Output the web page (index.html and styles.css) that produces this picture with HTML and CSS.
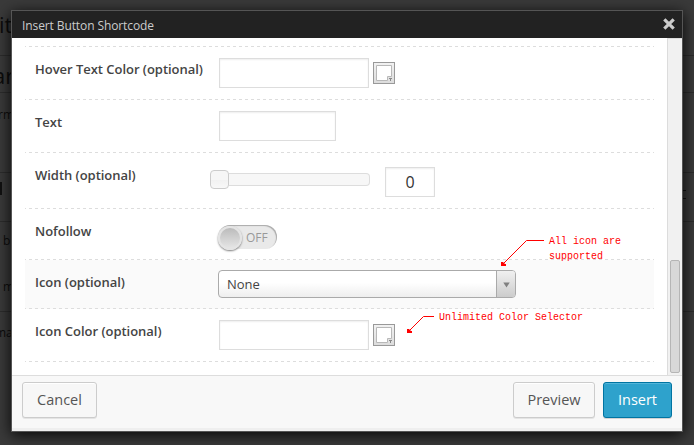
FILE: index.html
```html
<!DOCTYPE html>
<html lang="en">
<head>
<meta charset="utf-8">
<title>Insert Button Shortcode</title>
<link rel="stylesheet" href="styles.css">
</head>
<body>
<div class="backdrop" aria-hidden="true">
  <i class="rule r1"></i><i class="rule r2"></i><i class="rule r3"></i><i class="rule r4"></i><i class="rule r5"></i>
  <span class="ghost g1">it</span>
  <span class="ghost g2">ar</span>
  <span class="ghost g3">rm</span>
  <span class="ghost g4">b</span>
  <span class="ghost g5">m</span>
  <span class="ghost g6">ma</span>
  <i class="chip"></i>
  <i class="menu"></i>
</div>
<div class="modal">
  <header class="head">
    <span class="title">Insert Button Shortcode</span>
    <svg class="close" width="14" height="14" viewBox="0 0 14 14"><path d="M2.3 2.3L11.7 11.7M11.7 2.3L2.3 11.7"/></svg>
  </header>
  <main class="body">
    <div class="form">
      <div class="lead"></div>
      <div class="row">
        <label class="label">Hover Text Color (optional)</label>
        <div class="input"></div>
        <svg class="swatch" width="22" height="22" viewBox="0 0 22 22"><use href="#picker"/></svg>
      </div>
      <div class="row">
        <label class="label">Text</label>
        <div class="input short"></div>
      </div>
      <div class="row tall">
        <label class="label">Width (optional)</label>
        <div class="slider"><div class="knob"></div><div class="track"></div></div>
        <div class="input number">0</div>
      </div>
      <div class="row nofollow">
        <label class="label">Nofollow</label>
        <div class="toggle"><div class="ball"></div><span>OFF</span></div>
      </div>
      <div class="row icon">
        <label class="label">Icon (optional)</label>
        <div class="select"><span class="value">None</span><span class="arrow"><svg width="7" height="6" viewBox="0 0 7 6"><path d="M0.3 0.5H6.7L3.5 5.5Z"/></svg></span></div>
      </div>
      <div class="row">
        <label class="label">Icon Color (optional)</label>
        <div class="input"></div>
        <svg class="swatch" width="22" height="22" viewBox="0 0 22 22"><use href="#picker"/></svg>
      </div>
    </div>
    <div class="scroll"><div class="thumb"></div></div>
  </main>
  <footer class="foot">
    <div class="button cancel">Cancel</div>
    <div class="button preview">Preview</div>
    <div class="button primary">Insert</div>
  </footer>
</div>
<svg class="pointer p1" width="46" height="30" viewBox="0 0 46 30"><path class="line" d="M3 26L26.5 2.5H44"/><path class="tip" d="M1 24H3L5 26H6V28H1Z"/></svg>
<div class="note n1">All icon are<br>supported</div>
<svg class="pointer p2" width="30" height="20" viewBox="0 0 30 20"><path class="line" d="M3 16L17.5 1.5H28"/><path class="tip" d="M1 14H3L5 16H6V18H1Z"/></svg>
<div class="note n2">Unlimited Color Selector</div>
<svg class="defs" width="0" height="0">
  <defs>
    <linearGradient id="shade" x1="0" y1="0" x2="0" y2="1"><stop offset="0" stop-color="#f2f2f2"/><stop offset="1" stop-color="#dcdcdc"/></linearGradient>
    <g id="picker">
      <rect x=".5" y=".5" width="21" height="21" fill="url(#shade)" stroke="#999"/>
      <path d="M3.5 3.5H18.5V14.5H14.5V18.5H3.5Z" fill="#fff" stroke="#b8b8b8"/>
      <path d="M16 16H19V17H18V19H17V17H16Z" fill="#888"/>
    </g>
  </defs>
</svg>
</body>
</html>
```
FILE: styles.css
```css
* { box-sizing: border-box; }
body {
  margin: 0;
  width: 694px;
  height: 445px;
  overflow: hidden;
  position: relative;
  padding: 10px 11px;
  background: #3a3a3a;
  font-family: "Open Sans", "Liberation Sans", sans-serif;
}
.backdrop { position: absolute; inset: 0; }
.rule { position: absolute; left: 0; right: 0; height: 1px; background: #2c2c2c; }
.r1 { top: 55px; }
.r2 { top: 92px; }
.r3 { top: 172px; }
.r4 { top: 221px; }
.r5 { top: 311px; }
.ghost { position: absolute; left: 0; color: #0c0c0c; white-space: nowrap; }
.g1 { top: 9px; left: -1px; font-size: 22px; }
.g2 { top: 60px; left: -7px; font-size: 22px; }
.g3 { top: 106px; left: -2px; font-size: 12px; }
.g4 { top: 232px; left: 3px; font-size: 12px; }
.g5 { top: 278px; left: 3px; font-size: 12px; }
.g6 { top: 324px; left: -5px; font-size: 12px; }
.chip { position: absolute; top: 182px; left: 0; width: 2px; height: 13px; background: #111; }
.menu { position: absolute; top: 190px; left: 680px; width: 6px; height: 9px; border: solid #111; border-width: 1px 0; }

.modal {
  position: relative;
  width: 672px;
  height: 422px;
  border: 1px solid #555;
  background: #fff;
  display: flex;
  flex-direction: column;
  box-shadow: 0 3px 14px rgba(0, 0, 0, .9);
}
.head {
  height: 27px;
  flex: none;
  background: #222;
  color: #ccc;
  display: flex;
  align-items: center;
  justify-content: space-between;
  padding: 2px 6px 0 10px;
}
.title { font-size: 12px; line-height: 18px; letter-spacing: -.1px; }
.close { margin-top: -3px; }
.close path { fill: none; stroke: #ccc; stroke-width: 3.2; stroke-linecap: butt; }
.body { height: 337px; flex: none; display: flex; }
.form { width: 655px; padding: 0 13px; }
.lead, .row {
  background: repeating-linear-gradient(90deg, #ddd 0 1px, transparent 1px 4px, #ddd 4px 6px) left bottom / 100% 1px no-repeat;
}
.lead { height: 9px; }
.row { height: 53px; display: flex; align-items: flex-start; padding: 11px 0 0 10px; }
.row.tall { height: 56px; padding-top: 14px; }
.row.nofollow { height: 51px; padding-top: 16px; }
.row.icon { height: 49px; padding-top: 10px; background-color: #fafafa; }
.label { width: 184px; flex: none; color: #444; font-size: 13px; font-weight: 600; line-height: 22px; letter-spacing: -.03px; }
.tall .label { width: 175px; margin-top: -3px; }
.nofollow .label { width: 183px; margin-top: -5px; }
.icon .label { width: 183px; margin-top: 1px; }
.input {
  width: 150px;
  height: 30px;
  border: 1px solid #ddd;
  background: #fff;
  box-shadow: inset 0 1px 2px rgba(0, 0, 0, .07);
}
.input.short { width: 117px; }
.input.number { width: 50px; margin-left: 15px; color: #333; font-size: 16px; line-height: 29px; text-align: center; }
.swatch { margin: 4px 0 0 4px; }
.slider { width: 160px; height: 19px; margin-top: 3px; display: flex; align-items: center; }
.knob { width: 19px; height: 19px; border: 1px solid #ccc; border-radius: 4px; background: linear-gradient(#f6f6f6 50%, #f1f1f1 50%, #f8f8f8); }
.track { flex: 1; height: 13px; border: 1px solid #ddd; border-left: 0; border-radius: 0 4px 4px 0; background: #f7f7f7; }
.toggle {
  width: 59px;
  height: 24px;
  border-radius: 12px;
  background: #e9e9e9;
  box-shadow: inset -1px 1px 1px #aaa;
  display: flex;
  align-items: center;
  color: #999;
  font-size: 12px;
}
.ball {
  width: 24px;
  height: 24px;
  margin: 1px 4px 0 0;
  border: 2px solid #e4e4e4;
  border-radius: 50%;
  background: linear-gradient(#bbb, #e5e5e5);
  box-shadow: 0 1px 2px #777;
}
.select {
  width: 298px;
  height: 28px;
  border: 1px solid #aaa;
  border-radius: 4px;
  overflow: hidden;
  background: linear-gradient(#fff 45%, #eee);
  display: flex;
}
.value { flex: 1; padding-left: 8px; color: #444; font-size: 13px; line-height: 27px; }
.arrow { width: 19px; border-left: 1px solid #aaa; background: linear-gradient(#f0f0f0, #ccc); display: flex; align-items: center; justify-content: center; padding-top: 2px; }
.arrow path { fill: #808080; }
.scroll { width: 15px; border: solid #dcdcdc; border-width: 1px 0 0 1px; background: #f1f1f1; padding: 221px 2px 0; }
.thumb { width: 10px; height: 113px; border: 1px solid #b5b5b5; border-radius: 2px; background: #d8d8d8; }
.foot {
  flex: 1;
  display: flex;
  align-items: flex-start;
  padding: 6px 10px 0;
  border-top: 1px solid #ddd;
  background: #f8f8f8;
  box-shadow: inset 0 -3px #efefef;
}
.button {
  height: 36px;
  border: 1px solid #ccc;
  border-radius: 3px;
  background: #f7f7f7;
  box-shadow: inset 0 1px 0 #fff, 0 1px 0 rgba(0, 0, 0, .08);
  color: #555;
  font-size: 14.5px;
  line-height: 34px;
  text-align: center;
}
.cancel { width: 75px; margin-right: auto; }
.preview { width: 82px; margin-right: 8px; }
.primary { width: 69px; border-color: #0074a2; background: #2ea2cc; box-shadow: inset 0 1px 0 rgba(120, 200, 230, .5), 0 1px 0 rgba(0, 0, 0, .15); color: #fff; }

.pointer { position: absolute; }
.p1 { left: 500px; top: 238px; }
.p2 { left: 406px; top: 315px; }
.line { fill: none; stroke: #f00; stroke-width: 1; }
.tip { fill: #f00; }
.note { position: absolute; color: #f00; font: 10px/15px "Liberation Mono", monospace; white-space: nowrap; }
.n1 { left: 549px; top: 234px; }
.n2 { left: 439px; top: 310px; }
.defs { position: absolute; }
```
